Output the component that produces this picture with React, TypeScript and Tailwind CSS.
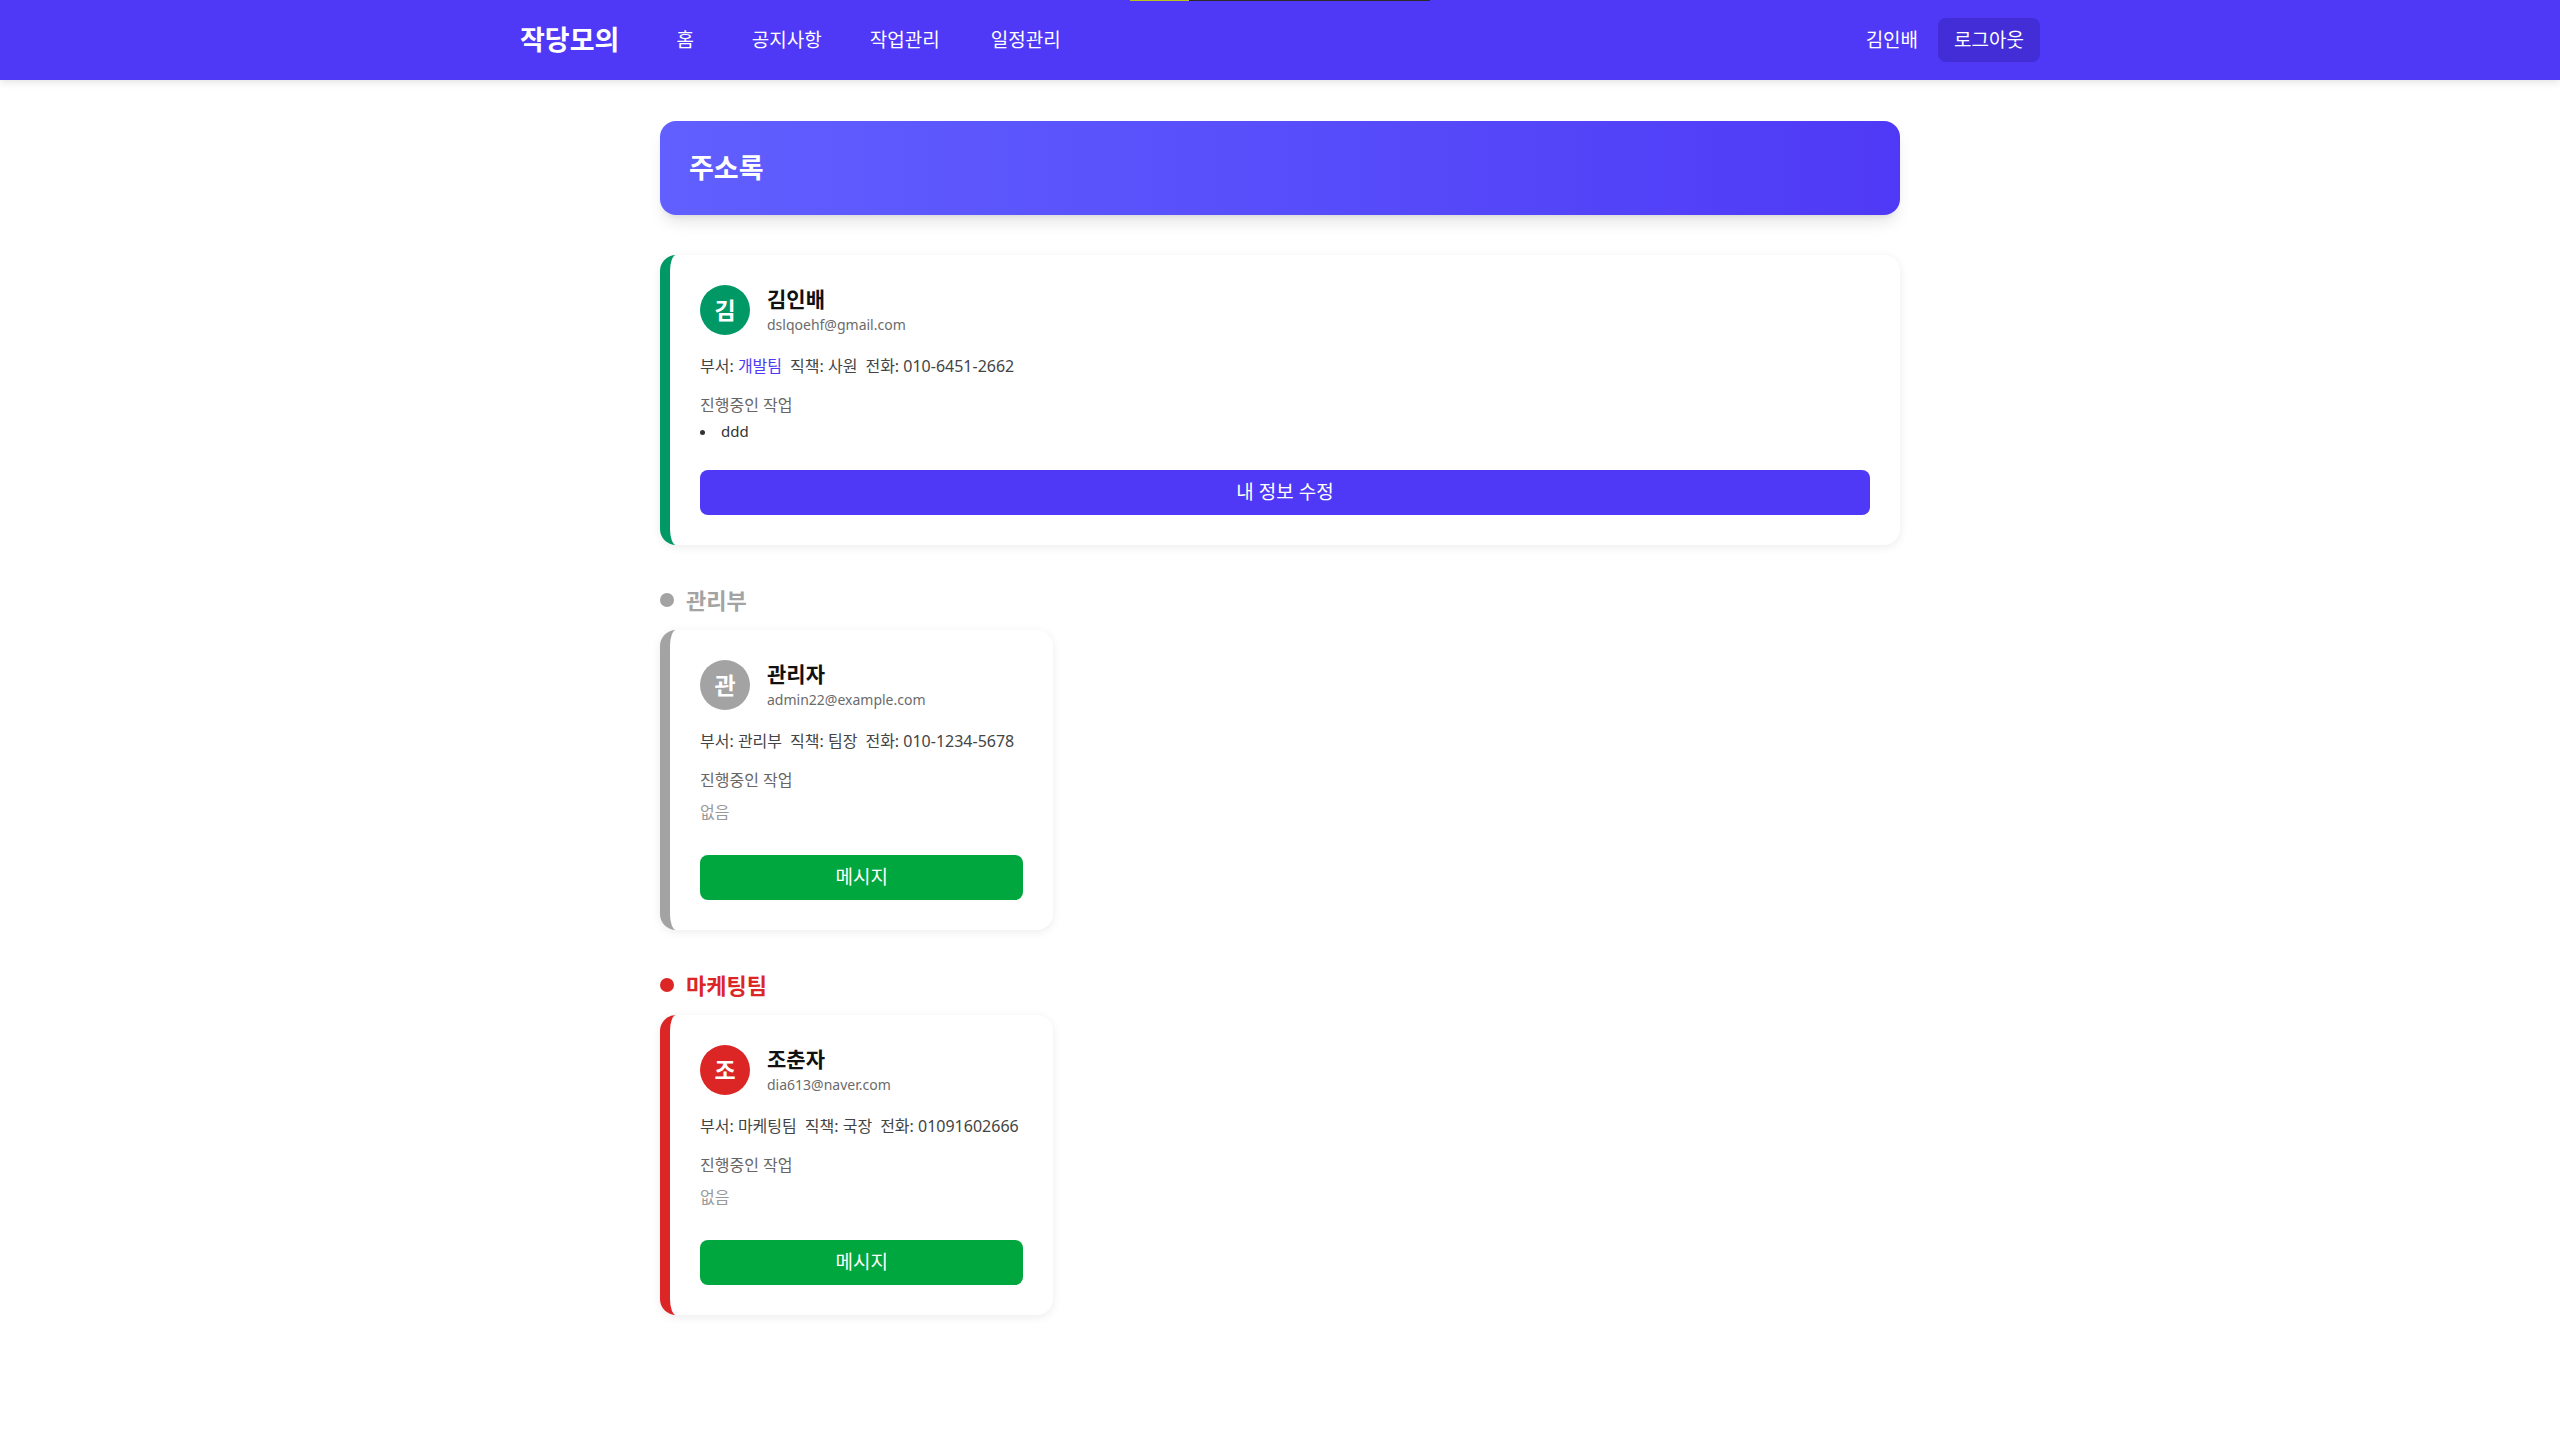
const font = { fontFamily: '"Noto Sans", "Noto Sans CJK KR", sans-serif' };

type Member = {
  initial: string;
  name: string;
  email: string;
  dept: string;
  role: string;
  phone: string;
  tasks: string[];
};

const groups = [
  {
    dept: "관리부",
    dot: "bg-[#a3a3a3]",
    title: "text-[#a3a3a3]",
    border: "border-[#a3a3a3]",
    avatar: "bg-[#a3a3a3]",
    members: [
      {
        initial: "관",
        name: "관리자",
        email: "admin22@example.com",
        dept: "관리부",
        role: "팀장",
        phone: "010-1234-5678",
        tasks: [],
      },
    ],
  },
  {
    dept: "마케팅팀",
    dot: "bg-[#dc2626]",
    title: "text-[#dc2626]",
    border: "border-[#dc2626]",
    avatar: "bg-[#dc2626]",
    members: [
      {
        initial: "조",
        name: "조춘자",
        email: "dia613@naver.com",
        dept: "마케팅팀",
        role: "국장",
        phone: "01091602666",
        tasks: [],
      },
    ],
  },
];

function CardHead({ m, avatar }: { m: Member; avatar: string }) {
  return (
    <div className="flex items-start gap-[17px]">
      <div
        className={`w-[50px] h-[50px] rounded-full ${avatar} flex items-center justify-center text-white text-[23px] font-bold shrink-0`}
      >
        {m.initial}
      </div>
      <div>
        <div className="text-[21px] font-bold leading-7 text-[#111]">{m.name}</div>
        <div className="text-sm leading-[24px] text-[#6b6b6b]">{m.email}</div>
      </div>
    </div>
  );
}

function Info({ m, deptClass = "" }: { m: Member; deptClass?: string }) {
  return (
    <div className="mt-[18px] flex gap-2 text-base leading-[22px] text-[#444]">
      <span>
        부서: <span className={deptClass}>{m.dept}</span>
      </span>
      <span>직책: {m.role}</span>
      <span>전화: {m.phone}</span>
    </div>
  );
}

function MemberCard({ m, border, avatar }: { m: Member; border: string; avatar: string }) {
  return (
    <div
      className={`bg-white rounded-2xl border-l-[10px] ${border} p-[30px] shadow-[0_2px_10px_rgba(0,0,0,0.08)]`}
    >
      <CardHead m={m} avatar={avatar} />
      <Info m={m} />
      <div className="mt-[18px] text-base leading-5 text-[#666]">진행중인 작업</div>
      <div className="mt-3 text-base leading-5 text-[#999]">없음</div>
      <button className="mt-[33px] w-full h-[45px] rounded-lg bg-[#00a63e] text-white text-[19px]">
        메시지
      </button>
    </div>
  );
}

export default function App() {
  const me: Member = {
    initial: "김",
    name: "김인배",
    email: "dslqoehf@gmail.com",
    dept: "개발팀",
    role: "사원",
    phone: "010-6451-2662",
    tasks: ["ddd"],
  };

  return (
    <div className="min-h-screen bg-white relative" style={font}>
      <div className="absolute top-0 left-[1130px] flex h-px">
        <div className="w-[59px] bg-[#b8c41c]" />
        <div className="w-[241px] bg-[#2b2b2b]" />
      </div>

      <header className="bg-[#4f39f6] h-20 shadow-[0_2px_8px_rgba(0,0,0,0.12)]">
        <div className="max-w-[1520px] mx-auto h-full flex items-center justify-between">
          <div className="flex items-center">
            <div className="text-[27px] font-bold text-white">작당모의</div>
            <nav className="ml-[57px] flex gap-12 text-[19px] text-white">
              <span className="mr-[10px]">홈</span>
              <span>공지사항</span>
              <span>작업관리</span>
              <span className="ml-[3px]">일정관리</span>
            </nav>
          </div>
          <div className="flex items-center gap-5 text-[19px] text-white">
            <span>김인배</span>
            <button className="h-11 px-4 rounded-lg bg-[#432dd7]">로그아웃</button>
          </div>
        </div>
      </header>

      <main className="max-w-[1240px] mx-auto pt-[41px] pb-20">
        <div className="rounded-2xl bg-gradient-to-r from-[#615fff] to-[#4f39f6] px-[29px] py-[31px] shadow-lg">
          <h1 className="text-[27px] leading-8 font-bold text-white">주소록</h1>
        </div>

        <div className="mt-10 bg-white rounded-2xl border-l-[10px] border-[#009966] p-[30px] shadow-[0_2px_10px_rgba(0,0,0,0.08)]">
          <CardHead m={me} avatar="bg-[#009966]" />
          <Info m={me} deptClass="text-[#4f39f6]" />
          <div className="mt-[18px] text-base leading-5 text-[#666]">진행중인 작업</div>
          <ul className="mt-1.5 list-disc list-inside text-[15px] leading-5 text-[#333]">
            {me.tasks.map((t) => (
              <li key={t}>{t}</li>
            ))}
          </ul>
          <button className="mt-[29px] w-full h-[45px] rounded-lg bg-[#4f39f6] text-white text-[19px]">
            내 정보 수정
          </button>
        </div>

        {groups.map((g) => (
          <section key={g.dept} className="mt-[41px]">
            <h2 className={`flex items-center gap-3 text-[22px] leading-7 font-bold ${g.title}`}>
              <span className={`w-[14px] h-[14px] rounded-full ${g.dot}`} />
              {g.dept}
            </h2>
            <div className="mt-4 grid grid-cols-3 gap-[30px]">
              {g.members.map((m) => (
                <MemberCard key={m.email} m={m} border={g.border} avatar={g.avatar} />
              ))}
            </div>
          </section>
        ))}
      </main>
    </div>
  );
}
